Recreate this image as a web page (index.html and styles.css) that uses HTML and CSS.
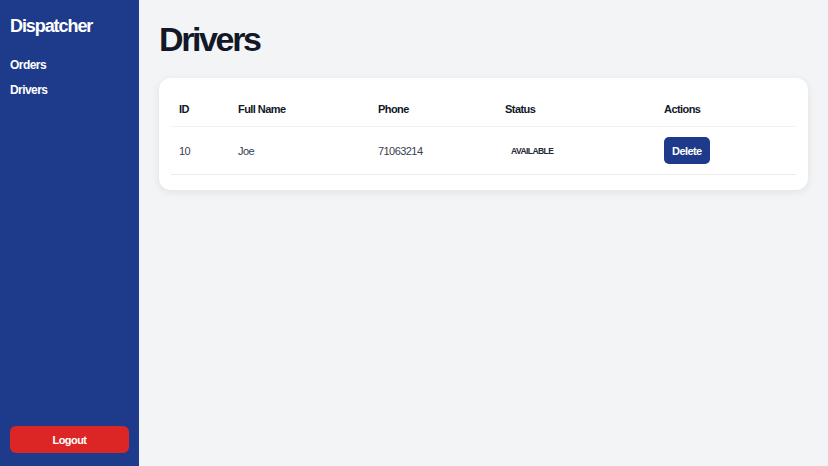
FILE: index.html
```html
<!DOCTYPE html>
<html lang="en">
<head>
    <meta charset="UTF-8">
    <meta name="viewport" content="width=device-width, initial-scale=1.0">
    <title>Dispatcher - Drivers</title>
    <link rel="stylesheet" href="styles.css">
</head>
<body>
    <div class="layout">
        <aside class="sidebar">
            <h2 class="brand">Dispatcher</h2>
            <nav class="nav">
                <a href="#" class="nav-link">Orders</a>
                <a href="#" class="nav-link">Drivers</a>
            </nav>
            <button class="logout-btn">Logout</button>
        </aside>

        <main class="main">
            <h1 class="page-title">Drivers</h1>
            <div class="card">
                <table class="table">
                    <thead>
                        <tr>
                            <th class="col-id">ID</th>
                            <th class="col-name">Full Name</th>
                            <th class="col-phone">Phone</th>
                            <th class="col-status">Status</th>
                            <th>Actions</th>
                        </tr>
                    </thead>
                    <tbody>
                        <tr>
                            <td>10</td>
                            <td>Joe</td>
                            <td>71063214</td>
                            <td><span class="badge">AVAILABLE</span></td>
                            <td><button class="delete-btn">Delete</button></td>
                        </tr>
                    </tbody>
                </table>
            </div>
        </main>
    </div>
</body>
</html>
```

FILE: styles.css
```css
* { box-sizing: border-box; }
body { margin: 0; font-family: "Liberation Sans", Arial, sans-serif; letter-spacing: -0.035em; background: #f3f4f6; color: #111827; }
.layout { display: flex; min-height: 466px; }

.sidebar { width: 139px; flex-shrink: 0; background: #1e3a8a; color: #fff; padding: 16px 10px 13px; display: flex; flex-direction: column; }
.brand { margin: 0; font-size: 18px; font-weight: bold; line-height: 21px; letter-spacing: -0.06em; }
.nav { display: flex; flex-direction: column; gap: 11px; margin-top: 21px; }
.nav-link { color: #fff; text-decoration: none; font-size: 12px; font-weight: bold; line-height: 14px; }
.logout-btn { margin-top: auto; width: 100%; height: 27px; background: #dc2626; color: #fff; border: none; border-radius: 6px; font-family: inherit; letter-spacing: inherit; font-size: 11px; font-weight: bold; cursor: pointer; }

.main { flex: 1; padding: 20px; }
.page-title { margin: 0 0 19px; font-size: 34px; font-weight: bold; line-height: 39px; letter-spacing: -0.07em; color: #111827; }

.card { background: #fff; border-radius: 12px; box-shadow: 0 2px 8px rgba(0, 0, 0, 0.08); padding: 12px 12px 15px; }
.table { width: 100%; border-collapse: collapse; font-size: 11px; }
.table th { text-align: left; font-weight: bold; padding: 13px 8px 11px; border-bottom: 1px solid #f1f2f4; color: #111827; }
.table td { padding: 10px 8px; border-bottom: 1px solid #e9ebee; color: #374151; vertical-align: middle; }
.col-id { width: 59px; }
.col-name { width: 140px; }
.col-phone { width: 127px; }
.col-status { width: 159px; }

.badge { display: inline-block; padding: 2px 6px; font-size: 8.5px; font-weight: bold; color: #1f2937; }
.delete-btn { background: #1e3a8a; color: #fff; border: none; border-radius: 5px; height: 27px; padding: 0 8px; font-family: inherit; letter-spacing: inherit; font-size: 11px; font-weight: bold; cursor: pointer; }
```
